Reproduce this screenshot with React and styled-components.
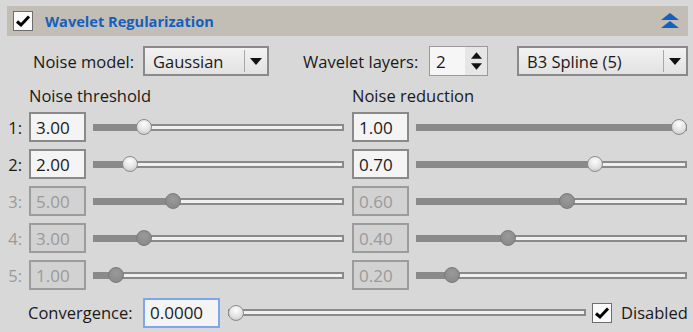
import React from "react";
import styled, { createGlobalStyle } from "styled-components";

const Global = createGlobalStyle`
  html, body { margin: 0; padding: 0; background: #d8d8d8; }
  body { font-family: "Open Sans", "Noto Sans", sans-serif; font-size: 16.5px; color: #1a1a1a; }
`;

const Panel = styled.div`
  width: 693px;
  height: 332px;
  box-sizing: border-box;
  padding: 6px 5px 0 0;
  background: #d8d8d8;
  overflow: hidden;
`;

const Header = styled.div`
  margin-left: 7px;
  height: 30px;
  background: #c2beb6;
  display: flex;
  align-items: center;
  padding: 0 9px 0 6px;
`;

const Title = styled.span`
  font-weight: 700;
  font-size: 14.6px;
  color: #1560bd;
  margin-left: 12px;
  flex: 1;
`;

const Box = styled.span`
  width: 18px;
  height: 18px;
  border: 1px solid #6e6e6e;
  background: #fafafa;
  display: inline-flex;
  align-items: center;
  justify-content: center;
  flex: none;
`;

const Check = () => (
  <Box>
    <svg width="16" height="14" viewBox="0 0 16 14">
      <path d="M2 7.5 L6 11 L14 2.5" fill="none" stroke="#000" strokeWidth="3" />
    </svg>
  </Box>
);

const Collapse = () => (
  <svg width="18" height="16" viewBox="0 0 18 16">
    <path d="M9 0 L18 7 L0 7 Z" fill="#1560bd" />
    <path d="M9 8 L18 15 L0 15 Z" fill="#1560bd" />
  </svg>
);

const Options = styled.div`
  display: flex;
  align-items: center;
  height: 30px;
  margin-top: 10px;
`;

const Label = styled.span`
  margin-left: ${(p) => p.$ml || 0}px;
  margin-right: ${(p) => p.$mr || 0}px;
  white-space: nowrap;
  color: ${(p) => (p.$disabled ? "#9a9a9a" : "#1a1a1a")};
`;

const FixedLabel = styled(Label)`
  width: ${(p) => p.$w}px;
  flex: none;
`;

const Combo = styled.div`
  width: ${(p) => p.$w}px;
  height: 30px;
  box-sizing: border-box;
  border: 2px solid #8a8a8a;
  background: linear-gradient(#f2f2f2, #e2e2e2);
  display: flex;
  align-items: center;
  margin-left: ${(p) => p.$ml || 0}px;
  flex: none;
`;

const ComboText = styled.span`
  flex: 1;
  padding-left: 8px;
`;

const ComboArrow = styled.span`
  width: 22px;
  height: 22px;
  border-left: 1px solid #a8a8a8;
  display: flex;
  align-items: center;
  justify-content: center;
`;

const Down = ({ w = 12, h = 7 }) => (
  <svg width={w} height={h} viewBox="0 0 12 7">
    <path d="M0 0 L12 0 L6 7 Z" fill="#111" />
  </svg>
);
const Up = ({ w = 12, h = 7 }) => (
  <svg width={w} height={h} viewBox="0 0 12 7">
    <path d="M0 7 L12 7 L6 0 Z" fill="#111" />
  </svg>
);

const Spin = styled.div`
  width: 59px;
  height: 30px;
  box-sizing: border-box;
  border: 1px solid #9a9a9a;
  display: flex;
  flex: none;
`;
const SpinText = styled.span`
  flex: 1;
  background: #f6f6f6;
  padding-left: 6px;
  display: flex;
  align-items: center;
  font-size: 17px;
`;
const SpinButtons = styled.span`
  width: 22px;
  background: #e6e6e6;
  display: flex;
  flex-direction: column;
  align-items: center;
  justify-content: space-around;
  padding: 3px 0;
`;

const ColHeads = styled.div`
  display: flex;
  height: 36px;
  align-items: center;
  padding: 2px 0 0 29px;
  box-sizing: border-box;
`;

const Rows = styled.div`
  display: flex;
  flex-direction: column;
  gap: 7px;
`;

const Row = styled.div`
  display: flex;
  align-items: center;
  height: 30px;
`;

const RowNum = styled.span`
  width: 29px;
  box-sizing: border-box;
  padding-right: 7px;
  text-align: right;
  flex: none;
  color: ${(p) => (p.$disabled ? "#9a9a9a" : "#1a1a1a")};
`;

const Field = styled.div`
  width: ${(p) => p.$w || 57}px;
  height: 30px;
  box-sizing: border-box;
  border: 2px solid ${(p) => (p.$focus ? "#7ea6ee" : p.$disabled ? "#9c9c9c" : "#8a8a8a")};
  background: ${(p) => (p.$disabled ? "#d2d2d2" : "#f4f4f4")};
  color: ${(p) => (p.$disabled ? "#9a9a9a" : "#1a1a1a")};
  display: flex;
  align-items: center;
  padding-left: 5px;
  font-size: 17px;
  flex: none;
  margin-left: ${(p) => p.$ml || 0}px;
`;

const SliderWrap = styled.div`
  position: relative;
  width: ${(p) => p.$w}px;
  height: 16px;
  margin-left: ${(p) => p.$ml || 0}px;
  display: flex;
  align-items: center;
  flex: none;
`;

const Track = styled.div`
  width: 100%;
  height: 7px;
  box-sizing: border-box;
  border: 2px solid #8a8a8a;
  background: #f0f0f0;
  display: flex;
`;

const Fill = styled.div`
  height: 100%;
  background: #8a8a8a;
`;

const Thumb = styled.div`
  position: absolute;
  top: 0;
  width: 16px;
  height: 16px;
  box-sizing: border-box;
  border-radius: 50%;
  border: 1px solid ${(p) => (p.$disabled ? "#7a7a7a" : "#8c8c8c")};
  background: ${(p) =>
    p.$disabled
      ? "radial-gradient(circle at 50% 35%, #9a9a9a, #858585)"
      : "radial-gradient(circle at 50% 30%, #fdfdfd, #e2e2e2 55%, #bdbdbd)"};
`;

const Slider = ({ w, ml, f, disabled }) => {
  const center = 8 + f * (w - 16);
  return (
    <SliderWrap $w={w} $ml={ml}>
      <Track>
        <Fill style={{ width: `${Math.max(0, center - 2)}px` }} />
      </Track>
      <Thumb $disabled={disabled} style={{ left: `${center - 8}px` }} />
    </SliderWrap>
  );
};

const Bottom = styled.div`
  display: flex;
  align-items: center;
  height: 31px;
  margin-top: 7px;
`;

const CheckLabel = styled.label`
  display: flex;
  align-items: center;
  gap: 9px;
  margin-left: 6px;
`;

const rows = [
  { n: "1:", a: "3.00", fa: 0.183, b: "1.00", fb: 1.0, d: false },
  { n: "2:", a: "2.00", fa: 0.123, b: "0.70", fb: 0.67, d: false },
  { n: "3:", a: "5.00", fa: 0.306, b: "0.60", fb: 0.562, d: true },
  { n: "4:", a: "3.00", fa: 0.183, b: "0.40", fb: 0.33, d: true },
  { n: "5:", a: "1.00", fa: 0.064, b: "0.20", fb: 0.11, d: true },
];

export default function App() {
  return (
    <Panel>
      <Global />
      <Header>
        <Check />
        <Title>Wavelet Regularization</Title>
        <Collapse />
      </Header>
      <Options>
        <FixedLabel $ml={33} $w={110}>Noise model:</FixedLabel>
        <Combo $w={126}>
          <ComboText>Gaussian</ComboText>
          <ComboArrow><Down /></ComboArrow>
        </Combo>
        <FixedLabel $ml={34} $w={126}>Wavelet layers:</FixedLabel>
        <Spin>
          <SpinText>2</SpinText>
          <SpinButtons>
            <Up w={11} h={7} />
            <Down w={11} h={7} />
          </SpinButtons>
        </Spin>
        <Combo $w={171} $ml={29}>
          <ComboText>B3 Spline (5)</ComboText>
          <ComboArrow><Down /></ComboArrow>
        </Combo>
      </Options>
      <ColHeads>
        <FixedLabel $w={323}>Noise threshold</FixedLabel>
        <Label>Noise reduction</Label>
      </ColHeads>
      <Rows>
        {rows.map((r) => (
          <Row key={r.n}>
            <RowNum $disabled={r.d}>{r.n}</RowNum>
            <Field $disabled={r.d}>{r.a}</Field>
            <Slider w={251} ml={7} f={r.fa} disabled={r.d} />
            <Field $disabled={r.d} $ml={8}>{r.b}</Field>
            <Slider w={271} ml={7} f={r.fb} disabled={r.d} />
          </Row>
        ))}
      </Rows>
      <Bottom>
        <FixedLabel $ml={28} $w={115}>Convergence:</FixedLabel>
        <Field $w={77} $focus>0.0000</Field>
        <Slider w={358} ml={8} f={0} />
        <CheckLabel>
          <Check />
          <Label>Disabled</Label>
        </CheckLabel>
      </Bottom>
    </Panel>
  );
}
